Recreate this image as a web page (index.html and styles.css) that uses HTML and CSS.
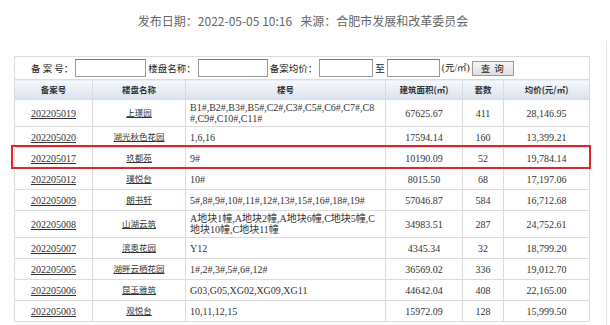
FILE: index.html
```html
<!DOCTYPE html>
<html lang="zh-CN">
<head>
<meta charset="utf-8">
<title>备案信息</title>
<link rel="stylesheet" href="styles.css">
</head>
<body>
<div class="title">发布日期：2022-05-05 10:16&nbsp;&nbsp;&nbsp;来源：合肥市发展和改革委员会</div>
<div class="page">
  <div class="tablewrap">
    <table class="grid">
      <colgroup>
        <col class="c1"><col class="c2"><col class="c3"><col class="c4"><col class="c5"><col class="c6">
      </colgroup>
      <tr class="search">
        <td colspan="6">
          <div class="searchbar">
            <span class="lbl spaced">备 案 号：</span><input class="inp w71" type="text">
            <span class="lbl">楼盘名称：</span><input class="inp w70" type="text">
            <span class="lbl">备案均价：</span><input class="inp w54" type="text">
            <span class="lbl">至</span><input class="inp w53" type="text">
            <span class="unit">(元/㎡)</span>
            <button class="btn" type="button">查 询</button>
          </div>
        </td>
      </tr>
      <tr class="head">
        <th>备案号</th><th>楼盘名称</th><th>楼号</th><th>建筑面积(㎡)</th><th>套数</th><th>均价(元/㎡)</th>
      </tr>
      <tr><td class="ctr"><a href="#">202205019</a></td><td class="ctr name"><a href="#">上璟园</a></td><td class="bld">B1#,B2#,B3#,B5#,C2#,C3#,C5#,C6#,C7#,C8<br>#,C9#,C10#,C11#</td><td class="ctr">67625.67</td><td class="ctr">411</td><td class="ctr">28,146.95</td></tr>
      <tr><td class="ctr"><a href="#">202205020</a></td><td class="ctr name"><a href="#">湖光秋色花园</a></td><td class="bld">1,6,16</td><td class="ctr">17594.14</td><td class="ctr">160</td><td class="ctr">13,399.21</td></tr>
      <tr><td class="ctr"><a href="#">202205017</a></td><td class="ctr name"><a href="#">玖都苑</a></td><td class="bld">9#</td><td class="ctr">10190.09</td><td class="ctr">52</td><td class="ctr">19,784.14</td></tr>
      <tr><td class="ctr"><a href="#">202205012</a></td><td class="ctr name"><a href="#">璞悦台</a></td><td class="bld">10#</td><td class="ctr">8015.50</td><td class="ctr">68</td><td class="ctr">17,197.06</td></tr>
      <tr><td class="ctr"><a href="#">202205009</a></td><td class="ctr name"><a href="#">朗书轩</a></td><td class="bld">5#,8#,9#,10#,11#,12#,13#,15#,16#,18#,19#</td><td class="ctr">57046.87</td><td class="ctr">584</td><td class="ctr">16,712.68</td></tr>
      <tr><td class="ctr"><a href="#">202205008</a></td><td class="ctr name"><a href="#">山湖云筑</a></td><td class="bld">A地块1幢,A地块2幢,A地块6幢,C地块5幢,C<br>地块10幢,C地块11幢</td><td class="ctr">34983.51</td><td class="ctr">287</td><td class="ctr">24,752.61</td></tr>
      <tr><td class="ctr"><a href="#">202205007</a></td><td class="ctr name"><a href="#">滨奥花园</a></td><td class="bld">Y12</td><td class="ctr">4345.34</td><td class="ctr">32</td><td class="ctr">18,799.20</td></tr>
      <tr><td class="ctr"><a href="#">202205005</a></td><td class="ctr name"><a href="#">湖畔云栖花园</a></td><td class="bld">1#,2#,3#,5#,6#,12#</td><td class="ctr">36569.02</td><td class="ctr">336</td><td class="ctr">19,012.70</td></tr>
      <tr><td class="ctr"><a href="#">202205006</a></td><td class="ctr name"><a href="#">昆玉雅筑</a></td><td class="bld">G03,G05,XG02,XG09,XG11</td><td class="ctr">44642.04</td><td class="ctr">408</td><td class="ctr">22,165.00</td></tr>
      <tr><td class="ctr"><a href="#">202205003</a></td><td class="ctr name"><a href="#">观悦台</a></td><td class="bld">10,11,12,15</td><td class="ctr">15972.09</td><td class="ctr">128</td><td class="ctr">15,999.50</td></tr>
    </table>
    <div class="highlight"></div>
  </div>
</div>
</body>
</html>
```
FILE: styles.css
```css
html, body {
  margin: 0;
  padding: 0;
  background: #fff;
}
body {
  font-family: "Liberation Serif", "Noto Sans CJK SC", serif;
  color: #333;
  overflow: hidden;
}
.title {
  height: 42px;
  box-sizing: border-box;
  padding-top: 13px;
  width: 606px;
  text-align: center;
  font-family: "Noto Sans CJK SC", "Noto Sans", sans-serif;
  font-size: 12px;
  line-height: 16px;
  color: #666;
}
.page {
  width: 607px;
  box-sizing: border-box;
  border-right: 1px solid #e6e6e6;
  padding: 14px 0 40px 14px;
}
.tablewrap {
  position: relative;
  width: 575px;
}
.grid {
  width: 575px;
  border-collapse: collapse;
  table-layout: fixed;
  font-size: 10px;
  line-height: 11px;
}
.c1 { width: 78px; }
.c2 { width: 93px; }
.c3 { width: 200px; }
.c4 { width: 77px; }
.c5 { width: 41px; }
.c6 { width: 86px; }
.grid td, .grid th {
  border: 1px solid #dcdcdc;
  padding: 2px 4px;
  height: 16px;
  color: #333;
  vertical-align: middle;
}
.grid td.ctr { text-align: center; }
.grid td.bld { text-align: left; padding-left: 4px; }
.grid td.name { font-size: 8.5px; }
.grid a { color: #333; text-decoration: underline; }
.search td {
  padding: 0;
  height: 22px;
}
.searchbar {
  display: flex;
  align-items: center;
  padding-left: 16px;
  font-family: "Noto Sans CJK SC", "Noto Sans", sans-serif;
  font-size: 9.5px;
  color: #222;
}
.lbl { margin-right: 2px; margin-left: 2px; white-space: nowrap; }
.lbl.spaced { margin-left: 0; }
.inp {
  height: 18px;
  box-sizing: border-box;
  border: 1px solid #9a9a9a;
  border-top-color: #7a7a7a;
  padding: 0;
  margin: 0;
  background: #fff;
}
.w71 { width: 71px; }
.w70 { width: 70px; }
.w54 { width: 54px; }
.w53 { width: 53px; }
.unit {
  margin-left: 2px;
  font-family: "Liberation Serif", "Noto Sans CJK SC", serif;
  font-size: 9.5px;
  white-space: nowrap;
}
.btn {
  margin-left: 2px;
  width: 42px;
  height: 15px;
  padding: 0;
  border: 1px solid #9a9a9a;
  background: linear-gradient(#f6f6f6, #dedede);
  font-family: "Noto Sans CJK SC", sans-serif;
  font-size: 9.5px;
  line-height: 13px;
  letter-spacing: 1px;
  color: #222;
}
.head th {
  height: 15px;
  background: linear-gradient(#f6f8fb, #dbe2ec);
  font-family: "Noto Sans CJK SC", "Noto Sans", sans-serif;
  font-size: 8.5px;
  font-weight: bold;
  color: #333;
  text-align: center;
}
.highlight {
  position: absolute;
  left: -3px;
  top: 89px;
  width: 580px;
  height: 24px;
  box-sizing: border-box;
  border: 2px solid #e0262c;
  pointer-events: none;
}
```
